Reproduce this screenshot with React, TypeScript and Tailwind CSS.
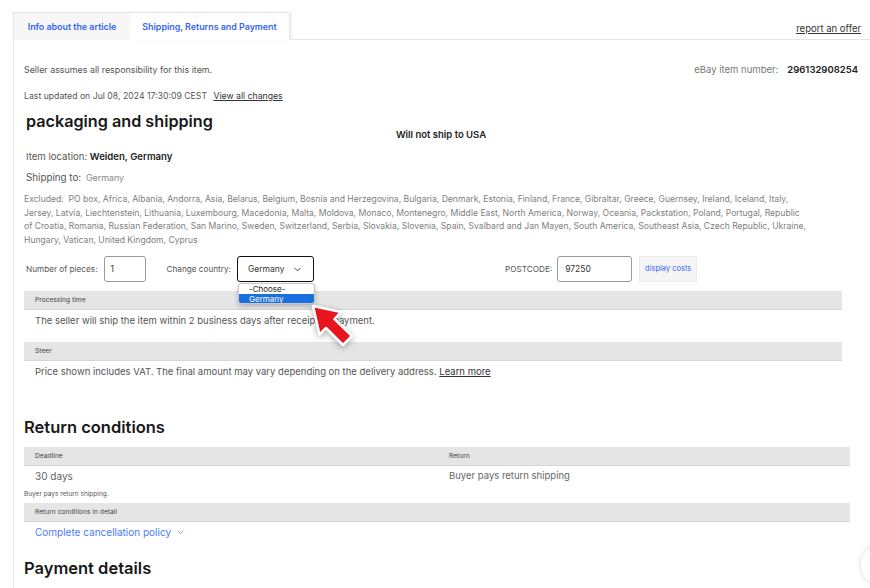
import { ChevronDown } from "lucide-react"

const EXCLUDED = [
  "Excluded:\u00a0 PO box, Africa, Albania, Andorra, Asia, Belarus, Belgium, Bosnia and Herzegovina, Bulgaria, Denmark, Estonia, Finland, France, Gibraltar, Greece, Guernsey, Ireland, Iceland, Italy,",
  "Jersey, Latvia, Liechtenstein, Lithuania, Luxembourg, Macedonia, Malta, Moldova, Monaco, Montenegro, Middle East, North America, Norway, Oceania, Packstation, Poland, Portugal, Republic",
  "of Croatia, Romania, Russian Federation, San Marino, Sweden, Switzerland, Serbia, Slovakia, Slovenia, Spain, Svalbard and Jan Mayen, South America, Southeast Asia, Czech Republic, Ukraine,",
  "Hungary, Vatican, United Kingdom, Cyprus",
]

function Bar({ label, wide }: { label: string; wide?: boolean }) {
  return (
    <div
      className={
        "h-[19px] bg-[#e5e5e5] border-b border-[#d6d6d6] flex items-center pl-[11px] text-[6.7px] text-[#444] " +
        (wide ? "w-[826px]" : "w-[818px]")
      }
    >
      {label}
    </div>
  )
}

export default function App() {
  return (
    <div className="relative w-[870px] h-[588px] overflow-hidden bg-white font-['Inter',sans-serif] text-[#333]">
      {/* tabs */}
      <div className="flex items-end pt-[11px] pl-[13px] h-[40px]">
        <div className="w-[117px] h-[28px] bg-[#f7f7f7] border-l border-t border-[#e5e5e5] flex items-center justify-center text-[8.9px] font-semibold text-[#3665f3]">
          Info about the article
        </div>
        <div className="w-[160px] h-[28px] bg-white border-t border-r border-[#e5e5e5] shadow-[2px_0_2px_rgba(0,0,0,0.06)] flex items-center justify-center text-[8.9px] font-semibold text-[#3665f3]">
          Shipping, Returns and Payment
        </div>
        <div className="flex-1 h-[28px] border-b border-[#e5e5e5] flex items-start justify-end pr-[9px] pt-[11px]">
          <span className="text-[9.5px] text-[#333] underline leading-[12px]">report an offer</span>
        </div>
      </div>

      {/* content */}
      <div className="ml-[13px] border-l border-[#e8e8e8] pl-[10px] pr-[12px] pt-[24px] h-[548px]">
        <div className="flex justify-between items-center h-[12px] text-[8.9px] text-[#555]">
          <span>Seller assumes all responsibility for this item.</span>
          <span className="text-[9.5px]">
            <span className="text-[#777]">eBay item number:</span>
            <span className="ml-[9px] font-semibold text-[#222]">296132908254</span>
          </span>
        </div>
        <div className="mt-[14px] h-[12px] leading-[12px] text-[8.7px] text-[#555]">
          Last updated on Jul 08, 2024 17:30:09 CEST <span className="ml-[4px] underline text-[#333]">View all changes</span>
        </div>

        <h2 className="mt-[9px] ml-[2px] h-[20px] leading-[20px] text-[16.2px] font-semibold text-[#191919]">
          packaging and shipping
        </h2>
        <div className="-mt-[2px] h-[12px] leading-[12px] text-center text-[9.5px] font-semibold text-[#222]">
          Will not ship to USA
        </div>

        <div className="mt-[10px] ml-[2px] h-[12px] leading-[12px] text-[9.6px] text-[#555]">
          Item location: <span className="font-semibold text-[#222]">Weiden, Germany</span>
        </div>
        <div className="mt-[9px] ml-[2px] h-[12px] leading-[12px] text-[9.8px] text-[#555]">
          Shipping to: <span className="ml-[2px] text-[8.9px] text-[#888]">Germany</span>
        </div>
        <div className="mt-[9px] text-[8.6px] leading-[13.5px] text-[#808080] whitespace-nowrap">
          {EXCLUDED.map((l) => (
            <div key={l}>{l}</div>
          ))}
        </div>

        {/* form row */}
        <div className="mt-[9px] ml-[2px] flex items-center h-[26px] text-[8.2px] text-[#555]">
          <span>Number of pieces:</span>
          <div className="ml-[6px] w-[42px] h-[26px] border border-[#9a9a9a] rounded-[3px] flex items-center pl-[6px] text-[#333] text-[8.5px]">
            1
          </div>
          <span className="ml-[21px]">Change country:</span>
          <div className="ml-[6px] w-[77px] h-[26px] border-[1.5px] border-[#111] rounded-[3px] flex items-center justify-between pl-[10px] pr-[10px] text-[#333] text-[8.5px]">
            <span>Germany</span>
            <ChevronDown className="w-[11px] h-[11px] text-[#333]" strokeWidth={2} />
          </div>
          <span className="ml-[191px]">POSTCODE:</span>
          <div className="ml-[5px] w-[75px] h-[26px] border border-[#9a9a9a] rounded-[3px] flex items-center pl-[7px] text-[#333] text-[8.5px]">
            97250
          </div>
          <div className="ml-[7px] w-[58px] h-[26px] bg-[#f5f5f5] border border-[#ececec] flex items-center justify-center text-[7.5px] text-[#3665f3]">
            display costs
          </div>
        </div>

        <div className="mt-[9px]">
          <Bar label="Processing time" />
        </div>
        <div className="pt-[4px] pl-[11px] h-[32px] text-[9.5px] leading-[14px] text-[#555]">
          The seller will ship the item within 2 business days after receipt of payment.
        </div>
        <Bar label="Steer" />
        <div className="pt-[4px] pl-[11px] h-[14px] box-content text-[9.5px] leading-[14px] text-[#555]">
          Price shown includes VAT. The final amount may vary depending on the delivery address.{" "}
          <span className="underline text-[#333]">Learn more</span>
        </div>

        <h2 className="mt-[38px] h-[20px] leading-[20px] text-[16.5px] font-semibold text-[#191919]">
          Return conditions
        </h2>
        <div className="mt-[10px] w-[826px] h-[19px] bg-[#e5e5e5] border-b border-[#d6d6d6] flex items-center text-[6.7px] text-[#444]">
          <span className="pl-[11px] w-[425px]">Deadline</span>
          <span>Return</span>
        </div>
        <div className="flex h-[20px] items-center text-[9.5px] text-[#666]">
          <span className="pl-[11px] w-[425px] text-[10px]">30 days</span>
          <span>Buyer pays return shipping</span>
        </div>
        <div className="h-[17px] flex items-center text-[6.5px] text-[#555]">Buyer pays return shipping.</div>
        <Bar label="Return conditions in detail" wide />
        <div className="pl-[11px] h-[20px] flex items-center gap-[5px] text-[10px] text-[#4a7cf5]">
          Complete cancellation policy
          <ChevronDown className="w-[9px] h-[9px]" strokeWidth={2} />
        </div>
        <h2 className="mt-[15px] h-[22px] leading-[22px] text-[16.5px] font-semibold text-[#191919]">
          Payment details
        </h2>
      </div>

      {/* open select list */}
      <div className="absolute left-[238px] top-[283px] w-[77px] h-[21px] bg-white border border-[#c8c8c8] rounded-[3px] shadow-[0_2px_5px_rgba(0,0,0,0.25)] overflow-hidden text-[8px] leading-[10px]">
        <div className="pl-[10px] text-[#222]">-Choose-</div>
        <div className="pl-[10px] bg-[#1a6fe0] text-white">Germany</div>
      </div>

      {/* pointer arrow */}
      <svg
        className="absolute left-0 top-0 drop-shadow-[0_2px_3px_rgba(0,0,0,0.3)]"
        width="870"
        height="588"
        viewBox="0 0 870 588"
      >
        <polygon
          points="313,306 341,312 334.5,319 352,336 343,345 326,328 319.5,334.5"
          fill="#e8141e"
          stroke="#ffffff"
          strokeWidth="2.5"
          strokeLinejoin="round"
        />
      </svg>

      {/* floating round button, cut off */}
      <div className="absolute left-[861px] top-[545px] w-[40px] h-[40px] rounded-full bg-white shadow-[0_0_6px_rgba(0,0,0,0.15)]" />
    </div>
  )
}
